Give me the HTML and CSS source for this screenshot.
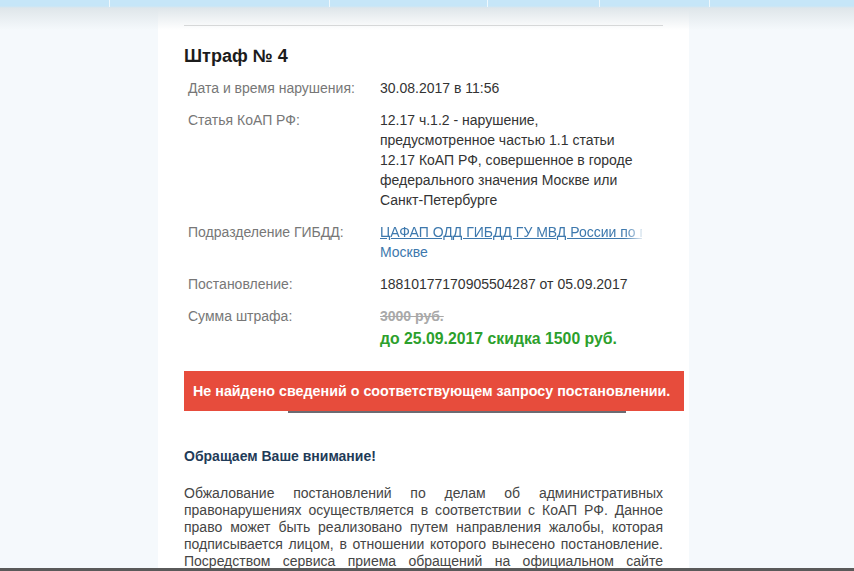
FILE: index.html
```html
<!DOCTYPE html>
<html lang="ru">
<head>
<meta charset="utf-8">
<title>Штраф № 4</title>
<link rel="stylesheet" href="styles.css">
</head>
<body>
<div class="topbar">
  <div class="topbar-strip">
    <span class="tab t1"></span><span class="tab t2"></span><span class="tab t3"></span><span class="tab t4"></span><span class="tab t5"></span><span class="tab t6"></span>
  </div>
</div>
<div class="page">
  <div class="card">
    <hr class="rule">
    <h2 class="title">Штраф № 4</h2>
    <div class="info">
      <div class="label">Дата и время нарушения:</div>
      <div class="value">30.08.2017 в 11:56</div>

      <div class="label">Статья КоАП РФ:</div>
      <div class="value">12.17 ч.1.2 - нарушение,<br>предусмотренное частью 1.1 статьи<br>12.17 КоАП РФ, совершенное в городе<br>федерального значения Москве или<br>Санкт-Петербурге</div>

      <div class="label">Подразделение ГИБДД:</div>
      <div class="value"><a class="link" href="#"><span class="clip">ЦАФАП ОДД ГИБДД ГУ МВД России по г.</span><span class="line">Москве</span></a></div>

      <div class="label">Постановление:</div>
      <div class="value">18810177170905504287 от 05.09.2017</div>

      <div class="label">Сумма штрафа:</div>
      <div class="value"><span class="old-sum">3000 руб.</span><span class="new-sum">до 25.09.2017 скидка 1500 руб.</span></div>
    </div>
    <div class="alert">Не найдено сведений о соответствующем запросу постановлении.</div>
    <h3 class="notice">Обращаем Ваше внимание!</h3>
    <p class="text">Обжалование постановлений по делам об административных правонарушениях осуществляется в соответствии с КоАП РФ. Данное право может быть реализовано путем направления жалобы, которая подписывается лицом, в отношении которого вынесено постановление. Посредством сервиса приема обращений на официальном сайте Госавтоинспекции жалоба может быть направлена.</p>
  </div>
</div>
<div class="bottomline"></div>
</body>
</html>
```
FILE: styles.css
```css
html, body {
  margin: 0;
  padding: 0;
  height: 100%;
  overflow: hidden;
}
body {
  background: #f5f9fc;
  font-family: "Liberation Sans", Arial, sans-serif;
  font-size: 14px;
  color: #333;
  position: relative;
}
.topbar {
  position: absolute;
  left: 0;
  right: 0;
  top: 0;
  height: 30px;
  background: linear-gradient(#c6e6f8 0, #c6e6f8 6px, #dfe6ea 8px, rgba(255,255,255,0) 30px);
  z-index: 2;
  pointer-events: none;
}
.topbar-strip {
  display: flex;
  height: 7px;
}
.tab {
  border-right: 1px solid #eef8fd;
  height: 100%;
}
.t1 { width: 109px; }
.t2 { width: 219px; }
.t3 { width: 157px; }
.t4 { width: 111px; }
.t5 { width: 109px; }
.t6 { flex: 1; border-right: 0; }
.page {
  padding-left: 158px;
  display: flex;
}
.card {
  width: 531px;
  box-sizing: border-box;
  background: #fff;
  padding: 25px 26px 0 26px;
  height: 571px;
}
.rule {
  margin: 0;
  border: 0;
  border-top: 1px solid #d4d4d4;
  width: 479px;
}
.title {
  margin: 19px 0 0 0;
  font-size: 18px;
  line-height: 22px;
  font-weight: bold;
  color: #1c1c1c;
}
.info {
  display: grid;
  grid-template-columns: 192px 262px;
  margin-top: 6px;
  padding-left: 4px;
  line-height: 20px;
}
.label, .value {
  padding: 5px 0 7px 0;
}
.label {
  color: #777;
}
.value {
  color: #333;
}
.link {
  color: #3d78ad;
  text-decoration: underline;
}
.clip {
  display: block;
  width: 262px;
  white-space: nowrap;
  overflow: hidden;
  -webkit-mask-image: linear-gradient(to right, #000 244px, transparent 266px);
  mask-image: linear-gradient(to right, #000 244px, transparent 266px);
}
.line {
  display: inline-block;
}
.old-sum {
  display: block;
  color: #a9a9a9;
  font-weight: bold;
  text-decoration: line-through;
}
.new-sum {
  display: block;
  margin-top: 3px;
  color: #2ca02c;
  font-weight: bold;
  font-size: 15.8px;
}
.alert {
  position: relative;
  margin-top: 15px;
  width: 500px;
  height: 40px;
  box-sizing: border-box;
  background: #e74c3c;
  color: #fff;
  font-weight: bold;
  font-size: 14.3px;
  line-height: 40px;
  padding-left: 9px;
}
.alert::after {
  content: "";
  position: absolute;
  left: 104px;
  width: 338px;
  bottom: -2px;
  height: 2px;
  background: #6b6b72;
}
.notice {
  margin: 36px 0 0 0;
  font-size: 14px;
  line-height: 18px;
  font-weight: bold;
  color: #1f3b58;
}
.text {
  margin: 20px 0 0 0;
  width: 479px;
  text-align: justify;
  line-height: 17px;
  color: #454545;
}
.bottomline {
  position: absolute;
  left: 0;
  right: 0;
  bottom: 0;
  height: 3px;
  background: #5a5a5a;
}
```
